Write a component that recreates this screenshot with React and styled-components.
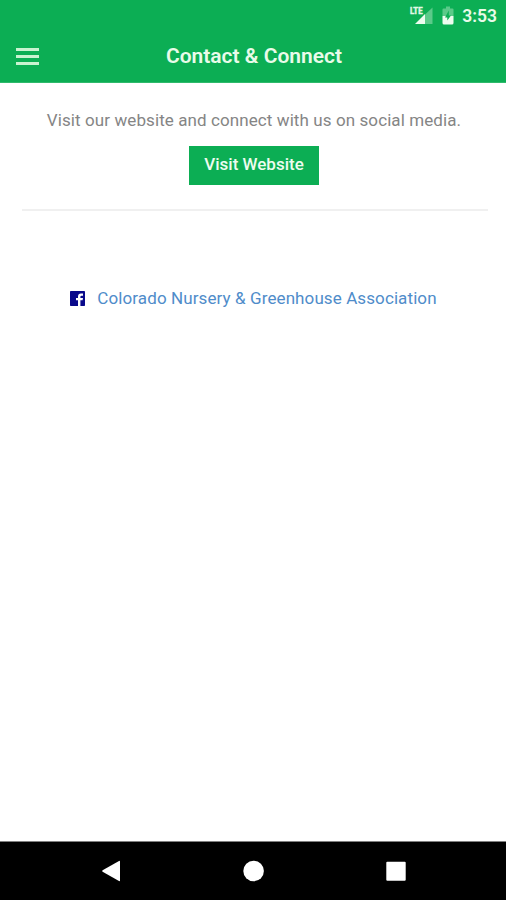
import React from 'react';
import styled, { createGlobalStyle } from 'styled-components';

const GlobalStyle = createGlobalStyle`
    * {
        box-sizing: border-box;
    }
    body {
        margin: 0;
        background: #ffffff;
        font-family: Roboto, sans-serif;
    }
`;

const Screen = styled.div`
    display: flex;
    flex-direction: column;
    width: 100%;
    height: 100vh;
    overflow: hidden;
`;

const StatusBar = styled.div`
    display: flex;
    justify-content: flex-end;
    align-items: center;
    height: 32px;
    padding-right: 9px;
    background: #0cae54;
`;

const SignalIcon = styled.svg`
    width: 24px;
    height: 32px;
    margin-right: 9px;
`;

const BatteryIcon = styled.svg`
    width: 12px;
    height: 32px;
    margin-right: 8px;
`;

const Clock = styled.span`
    color: #e9fbe9;
    font-size: 17.5px;
    font-weight: 600;
    line-height: 32px;
    white-space: nowrap;
`;

const Header = styled.header`
    display: grid;
    grid-template-columns: 56px 1fr 56px;
    align-items: center;
    height: 51px;
    padding: 0 0 2px 2px;
    background: #0cae54;
    border-bottom: 1px solid #2fba6c;
`;

const MenuButton = styled.button`
    display: flex;
    flex-direction: column;
    gap: 4.4px;
    width: 23px;
    margin: 1px 0 0 14px;
    padding: 0;
    border: none;
    background: none;
`;

const MenuLine = styled.span`
    height: 3px;
    background: #c9f3d0;
`;

const Title = styled.h1`
    margin: 0;
    color: #e9fbe9;
    font-size: 21px;
    font-weight: 600;
    line-height: 24px;
    text-align: center;
    white-space: nowrap;
`;

const Content = styled.main`
    display: flex;
    flex: 1;
    flex-direction: column;
    align-items: center;
    padding: 25px 20px 0 22px;
`;

const Message = styled.p`
    margin: 0 0 14px;
    color: #858585;
    font-size: 17px;
    letter-spacing: 0.09px;
    line-height: 24px;
    white-space: nowrap;
`;

const WebsiteButton = styled.button`
    width: 130px;
    height: 39px;
    padding: 0 0 3px;
    border: none;
    background: #0cae54;
    color: #edfcef;
    font-family: inherit;
    font-size: 17px;
    font-weight: 500;
    white-space: nowrap;
`;

const Divider = styled.hr`
    align-self: stretch;
    height: 2px;
    margin: 24px -2px 75px 0;
    border: none;
    background: #f0f0f0;
`;

const SocialLink = styled.a`
    display: flex;
    align-items: center;
    height: 24px;
    margin-right: 1px;
    color: #4f8cca;
    font-size: 17px;
    letter-spacing: 0.1px;
    text-decoration: none;
    white-space: nowrap;
`;

const FacebookIcon = styled.svg`
    width: 15px;
    height: 15px;
    margin-right: 12px;
`;

const NavBar = styled.nav`
    display: flex;
    justify-content: space-between;
    align-items: center;
    height: 59px;
    padding: 0 100px 0 101px;
    border-top: 1px solid #808080;
    background: #000000;
`;

const NavIcon = styled.svg`
    width: 20px;
    height: 22px;
    overflow: visible;
`;

{/* Contact screen */}
export default function App() {
    return (
        <>
            <GlobalStyle />
            <Screen>
                <StatusBar>
                    <SignalIcon viewBox="0 0 24 32">
                        <path d="M15 15.5L23.5 7.5V24H15Z" fill="#5bca89" />
                        <path d="M6 24L16 14V24Z" fill="#edfcef" />
                        <text x="1" y="14" fill="#e2f9e5" stroke="#e2f9e5" strokeWidth="0.5" fontSize="9.5" fontWeight="700" textLength="12.5" lengthAdjust="spacingAndGlyphs">LTE</text>
                    </SignalIcon>
                    <BatteryIcon viewBox="0 0 12 32">
                        <path d="M4 6.5H8V8.5H10.5Q11.5 8.5 11.5 9.5V16H0.5V9.5Q0.5 8.5 1.5 8.5H4Z" fill="#5bca89" />
                        <path d="M0.5 16H11.5V23Q11.5 24.5 10 24.5H2Q0.5 24.5 0.5 23Z" fill="#edfcef" />
                        <path d="M6.8 10.5L3 17.5H5.3V20.5L9 15.5H6.8Z" fill="#0cae54" />
                    </BatteryIcon>
                    <Clock>3:53</Clock>
                </StatusBar>
                <Header>
                    <MenuButton aria-label="Menu">
                        <MenuLine />
                        <MenuLine />
                        <MenuLine />
                    </MenuButton>
                    <Title>Contact &amp; Connect</Title>
                </Header>
                <Content>
                    <Message>Visit our website and connect with us on social media.</Message>
                    <WebsiteButton>Visit Website</WebsiteButton>
                    <Divider />
                    <SocialLink>
                        <FacebookIcon viewBox="0 0 15 15">
                            <rect width="15" height="15" rx="0.7" fill="#09098b" />
                            <path d="M8 15V9.2H6V7H8V5.5Q8 2.5 11 2.5H13V4.8H11.5Q10.4 4.8 10.4 5.8V7H13L12.6 9.2H10.4V15Z" fill="#ffffff" />
                        </FacebookIcon>
                        Colorado Nursery &amp; Greenhouse Association
                    </SocialLink>
                </Content>
                <NavBar>
                    <NavIcon viewBox="0 0 20 22">
                        <path d="M1.6 10.3L18 1Q19 0.5 19 1.5V20.5Q19 21.5 18 21L1.6 11.7Q0.7 11 1.6 10.3Z" fill="#ffffff" />
                    </NavIcon>
                    <NavIcon viewBox="0 0 20 22">
                        <circle cx="9.6" cy="11" r="10.3" fill="#ffffff" />
                    </NavIcon>
                    <NavIcon viewBox="0 0 20 22">
                        <rect x="0.3" y="1.7" width="19.4" height="19" rx="1" fill="#ffffff" />
                    </NavIcon>
                </NavBar>
            </Screen>
        </>
    );
}
